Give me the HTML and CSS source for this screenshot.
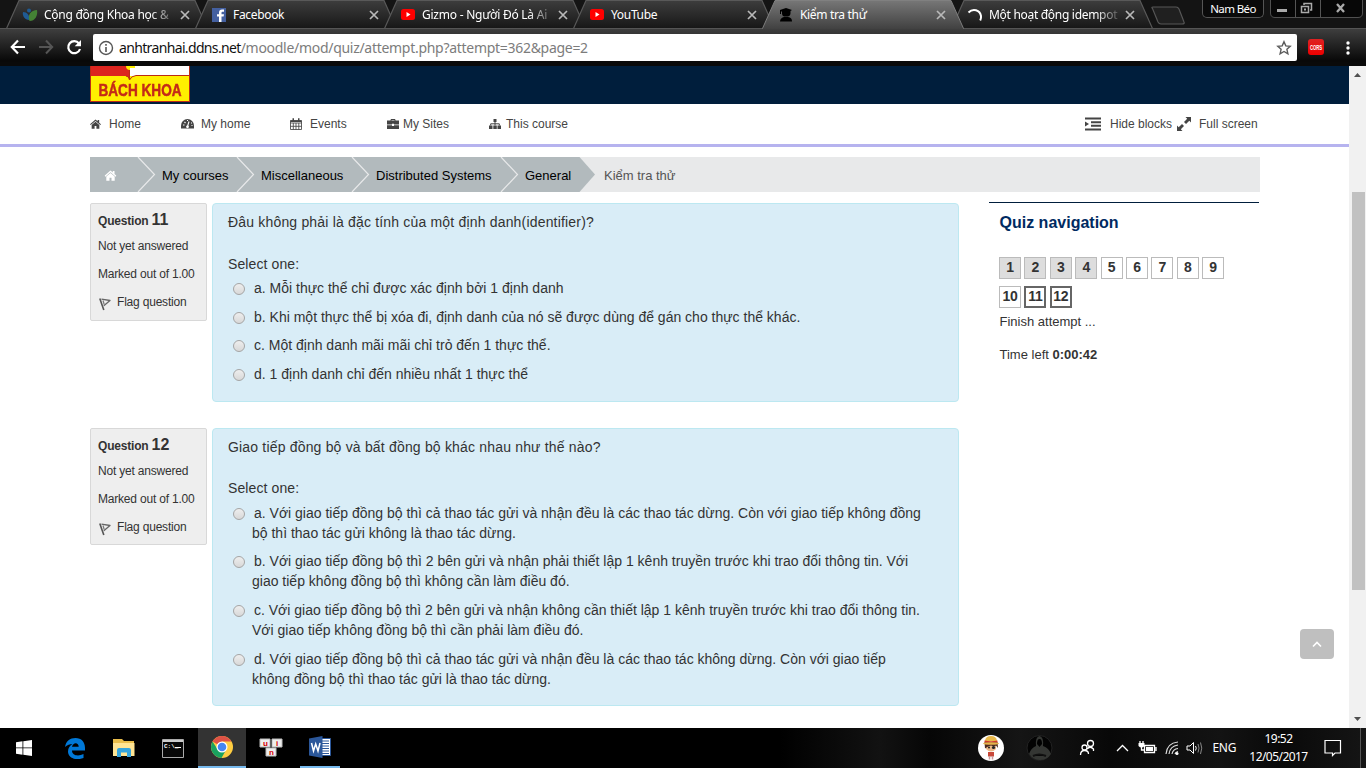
FILE: index.html
```html
<!DOCTYPE html>
<html lang="vi">
<head>
<meta charset="utf-8">
<title>Kiểm tra thử</title>
<link rel="stylesheet" href="styles.css">
</head>
<body>
<svg class="defs" width="0" height="0">
  <defs>
    <linearGradient id="tabg" x1="0" y1="0" x2="0" y2="1"><stop offset="0" stop-color="#3d3d3d"/><stop offset="1" stop-color="#171717"/></linearGradient>
    <linearGradient id="acg" x1="0" y1="0" x2="0" y2="1"><stop offset="0" stop-color="#777"/><stop offset="1" stop-color="#414141"/></linearGradient>
    <symbol id="tab" viewBox="0 0 202 29"><path d="M.5 28.500L13 .5H189L201.500 28.500Z" fill="url(#tabg)"/><path d="M.5 28.500L13 .5H189L201.500 28.500" fill="none" stroke="#595959" stroke-width="1.200"/></symbol>
    <symbol id="tabactive" viewBox="0 0 202 29"><path d="M.5 29L13 .5H189L201.500 29Z" fill="url(#acg)"/><path d="M.5 28.500L13 .5H189L201.500 28.500" fill="none" stroke="#808080"/></symbol>
    <symbol id="close" viewBox="0 0 10 10"><path d="M1 1L9 9M9 1L1 9" stroke="#b9b9b9" stroke-width="1.700"/></symbol>
    <symbol id="yt" viewBox="0 0 14 11"><rect width="14" height="11" rx="2.500" fill="#f00"/><path d="M5.500 3L9.500 5.500 5.500 8Z" fill="#fff"/></symbol>
    <symbol id="house" viewBox="0 0 12 11"><path d="M6 .5L0 5.700l.8 1L6 2.300l5.200 4.400.8-1-2-1.700V1H8.300V2.500Z" fill="currentColor"/><path d="M6 3L1.800 6.500V10.700H5V7.700H7V10.700H10.200V6.500Z" fill="currentColor"/></symbol>
    <symbol id="flag" viewBox="0 0 12 14"><path d="M.8 1.500L4.800 13" fill="none" stroke="#555" stroke-width="1.600"/><path d="M2.500 2.200L11 3.500 4.800 8.700" fill="none" stroke="#666" stroke-width="1.300" stroke-linejoin="round"/><path d="M4 3.500L5.200 7.500" stroke="#777" stroke-width="1.200"/></symbol>
  </defs>
</svg>

<header class="browser">
  <div class="strip">
    <div class="tabs">
      <div class="tab"><svg class="shape"><use href="#tab"/></svg><svg class="fav" viewBox="0 0 16 16"><circle cx="7" cy="3.500" r="2" fill="#1f5b94"/><path d="M1 5c4 0 7 3 6 8C3 13 0 9 1 5Z" fill="#1f5b94"/><path d="M15 3C9 3 5 8 7.500 14 13 14 16 9 15 3Z" fill="#448235"/></svg><span class="label fade t1">Cộng đồng Khoa học &amp;</span><svg class="x"><use href="#close"/></svg></div>
      <div class="tab"><svg class="shape"><use href="#tab"/></svg><svg class="fav" viewBox="0 0 16 16"><path d="M1 1H15V15H1Z" fill="#4460a0"/><path d="M8 15V9.500H6V7.200H8V5.500C8 3.500 9.200 2.500 11 2.500h2v2.200H11.700c-.9 0-1.200.4-1.200 1.100V7.200H13L12.600 9.500H10.500V15Z" fill="#fff"/></svg><span class="label">Facebook</span><svg class="x"><use href="#close"/></svg></div>
      <div class="tab"><svg class="shape"><use href="#tab"/></svg><svg class="fav yt"><use href="#yt"/></svg><span class="label fade t3">Gizmo - Người Đó Là Ai</span><svg class="x"><use href="#close"/></svg></div>
      <div class="tab"><svg class="shape"><use href="#tab"/></svg><svg class="fav yt"><use href="#yt"/></svg><span class="label">YouTube</span><svg class="x"><use href="#close"/></svg></div>
      <div class="tab active"><svg class="shape"><use href="#tabactive"/></svg><svg class="fav" viewBox="0 0 16 16"><path d="M2 3L8 1l6 2-1.500 1V6c0 3-2 3.500-4.500 3.500S4 9 4 6V4.500H3V7H2ZM2 14.500c0-2.500 2-4 4-4.500h4c3 .5 4 2 4 4.500Z" fill="#000"/></svg><span class="label">Kiểm tra thử</span><svg class="x"><use href="#close"/></svg></div>
      <div class="tab"><svg class="shape"><use href="#tab"/></svg><svg class="fav spin" viewBox="0 0 16 16"><path d="M1.500 4.500C6 0 13 2 14 8c.2 1.500 0 3-.8 4.500" fill="none" stroke="#fff" stroke-width="2"/></svg><span class="label fade t6">Một hoạt động idempot</span><svg class="x"><use href="#close"/></svg></div>
    </div>
    <svg class="newtab" viewBox="0 0 36 20"><path d="M2.500 2.500Q1 1 3 1H26Q28 1 29 3L34 16Q35 18 32 18H11Q9 18 8 16Z" fill="#202020" stroke="#565656" stroke-width="1.200"/></svg>
    <div class="user">Nam Béo</div>
    <svg class="winbtns" viewBox="0 0 94 18"><path d="M.5 0V13Q.5 17.500 5 17.500H88Q92.500 17.500 92.500 13V0" fill="#070707" stroke="#505050"/><path d="M25.500 0V17M50.500 0V17" stroke="#555"/><path d="M7 9H17V12H7Z" fill="#aaa"/><path d="M31.500 6.500H38.500V12.500H31.500ZM34 5V3.500H41.500V10H40" fill="none" stroke="#aaa" stroke-width="1.500"/><path d="M34 8.500h2v2h-2z" fill="#aaa"/><path d="M67 4l7 8M74 4l-7 8" stroke="#aaa" stroke-width="2.300"/></svg>
  </div>
  <div class="toolbar">
    <svg class="navicons" viewBox="0 0 93 34"><path d="M25 19H12.500M18 12.500L11.800 19 18 25.500" fill="none" stroke="#fff" stroke-width="2.200"/><path d="M39 19H51.500M46 12.500L52.200 19 46 25.500" fill="none" stroke="#555" stroke-width="2"/><path d="M79 15.500A6 6 0 1 0 80 21" fill="none" stroke="#fff" stroke-width="2.200"/><path d="M81 12V18.300H74.700Z" fill="#fff"/></svg>
    <div class="omnibox">
      <svg class="info" viewBox="0 0 16 16"><circle cx="8" cy="8" r="6.500" fill="none" stroke="#555" stroke-width="1.400"/><path d="M8 7V12M8 4V5.700" stroke="#555" stroke-width="1.600"/></svg>
      <span class="url"><b>anhtranhai.ddns.net</b>/moodle/mod/quiz/attempt.php?attempt=362&amp;page=2</span>
      <svg class="star" viewBox="0 0 16 16"><path d="M8 1.700L9.800 5.900l4.400.4L10.900 9.300l1 4.500L8 11.500 4.100 13.800l1-4.500L1.800 6.300l4.400-.4Z" fill="none" stroke="#5b5b5b" stroke-width="1.400"/></svg>
    </div>
    <div class="cors"><svg width="16" height="16" viewBox="0 0 16 16"><text x="2" y="10.500" textLength="12" lengthAdjust="spacingAndGlyphs">CORS</text></svg></div>
    <svg class="dots" viewBox="0 0 4 14"><circle cx="2" cy="2" r="1.700"/><circle cx="2" cy="7" r="1.700"/><circle cx="2" cy="12" r="1.700"/></svg>
  </div>
</header>

<div class="viewport">
  <main class="page">
    <div class="banner"><div class="logo"><svg class="book" viewBox="0 0 98 14"><path d="M0 0H98V10H0Z" fill="#fff"/><path d="M0 0H39V12H0Z" fill="#dc241f"/><path d="M0 10H34Q38 10 39 14Q40 10 46 10H98V14H0Z" fill="#fff000"/><path d="M35 0H44V2H39V4Q35 4 35 0Z" fill="#fff000"/><path d="M38.500 4V13M35 10Q38 10 38.500 14Q40 10 45 9.500H98" stroke="#ba2b15" fill="none"/></svg><span>BÁCH KHOA</span></div></div>
    <nav class="menu">
      <a class="m1"><svg viewBox="0 0 12 11"><use href="#house"/></svg>Home</a>
      <a class="m2"><svg viewBox="0 0 13 11"><path d="M0 10V7A6.500 6.500 0 0 1 13 7V10Z" fill="#444"/><path d="M6.500 8L8 3M2 6.500h1.500M3.500 3.500L4.500 4.500M6 2h1M10 4.500h1M10.500 7h1" stroke="#fff" stroke-width="1.100"/><circle cx="6.500" cy="8.300" r="1.400" fill="#fff"/></svg>My home</a>
      <a class="m3"><svg viewBox="0 0 12 12"><path d="M.5 2.500H11.500V11.500H.5ZM.5 5H11.500M.5 8.300H11.500M3.300 5V11.500M6 5V11.500M8.800 5V11.500" fill="none" stroke="#444" stroke-width=".85"/><path d="M.5 2.500H11.500V4H.5ZM2.500.3H4V3H2.500ZM8 .3H9.500V3H8Z" fill="#444"/></svg>Events</a>
      <a class="m4"><svg viewBox="0 0 12 11"><path d="M0 2H12V6H7V5.200H5V6H0ZM0 6.700H5V7.500H7V6.700H12V10.500H0Z" fill="#444"/><path d="M4 2.500V1H8V2.500" stroke="#444" fill="none"/></svg>My Sites</a>
      <a class="m5"><svg viewBox="0 0 12 11"><path d="M4.500 0.500H7.500V3.500H4.500ZM0 7H3.500V10.500H0ZM4.300 7H7.800V10.500H4.300ZM8.500 7H12V10.500H8.500Z" fill="#444"/><path d="M6 3V7M1.700 7V5.300H10.300V7" fill="none" stroke="#444"/></svg>This course</a>
      <a class="m6"><svg viewBox="0 0 16 14"><path d="M0 1.500H16M6 5.200H16M6 8.800H16M0 12.500H16" stroke="#444" stroke-width="1.900"/><path d="M0 4.500L4 7 0 9.500Z" fill="#444"/></svg>Hide blocks</a>
      <a class="m7"><svg viewBox="0 0 14 14"><path d="M8.500 0H14V5.500L12.300 3.800 9 7 7 5 10.200 1.700ZM0 8.500L1.700 10.200 5 7 7 9 3.800 12.300 5.500 14H0Z" fill="#444"/></svg>Full screen</a>
    </nav>
    <div class="crumbs">
      <svg class="arrows" viewBox="0 0 1170 35"><path d="M0 0H489.500L505 17.500 489.500 35H0Z" fill="#b2babd"/><path d="M48 0L64.500 17.500 48 35M147 0L163.500 17.500 147 35M262 0L278.500 17.500 262 35M411 0L427.500 17.500 411 35" fill="none" stroke="#e8e9ea" stroke-width="1.200"/></svg>
      <span class="c0"><svg viewBox="0 0 12 11"><use href="#house"/></svg></span><span class="c1">My courses</span><span class="c2">Miscellaneous</span><span class="c3">Distributed Systems</span><span class="c4">General</span><span class="c5">Kiểm tra thử</span>
    </div>
    <div class="columns">
      <div class="questions">
        <section class="question">
          <aside class="qinfo"><h3>Question <b>11</b></h3><p>Not yet answered</p><p>Marked out of 1.00</p><p class="fl"><svg><use href="#flag"/></svg>Flag question</p></aside>
          <div class="form q11">
            <p class="qt">Đâu không phải là đặc tính của một định danh(identifier)?</p>
            <p class="sel">Select one:</p>
            <label><i></i><span>a. Mỗi thực thể chỉ được xác định bởi 1 định danh</span></label>
            <label><i></i><span>b. Khi một thực thể bị xóa đi, định danh của nó sẽ được dùng để gán cho thực thể khác.</span></label>
            <label><i></i><span>c. Một định danh mãi mãi chỉ trỏ đến 1 thực thể.</span></label>
            <label><i></i><span>d. 1 định danh chỉ đến nhiều nhất 1 thực thể</span></label>
          </div>
        </section>
        <section class="question">
          <aside class="qinfo"><h3>Question <b>12</b></h3><p>Not yet answered</p><p>Marked out of 1.00</p><p class="fl"><svg><use href="#flag"/></svg>Flag question</p></aside>
          <div class="form q12">
            <p class="qt">Giao tiếp đồng bộ và bất đồng bộ khác nhau như thế nào?</p>
            <p class="sel">Select one:</p>
            <label><i></i><span>a. Với giao tiếp đồng bộ thì cả thao tác gửi và nhận đều là các thao tác dừng. Còn với giao tiếp không đồng<br>bộ thì thao tác gửi không là thao tác dừng.</span></label>
            <label><i></i><span>b. Với giao tiếp đồng bộ thì 2 bên gửi và nhận phải thiết lập 1 kênh truyền trước khi trao đổi thông tin. Với<br>giao tiếp không đồng bộ thì không cần làm điều đó.</span></label>
            <label><i></i><span>c. Với giao tiếp đồng bộ thì 2 bên gửi và nhận không cần thiết lập 1 kênh truyền trước khi trao đổi thông tin.<br>Với giao tiếp không đồng bộ thì cần phải làm điều đó.</span></label>
            <label><i></i><span>d. Với giao tiếp đồng bộ thì cả thao tác gửi và nhận đều là các thao tác không dừng. Còn với giao tiếp<br>không đồng bộ thì thao tác gửi là thao tác dừng.</span></label>
          </div>
        </section>
      </div>
      <aside class="side">
        <h2>Quiz navigation</h2>
        <div class="nums"><b class="done">1</b><b class="done">2</b><b class="done">3</b><b class="done">4</b><b>5</b><b>6</b><b>7</b><b>8</b><b>9</b><b>10</b><b class="cur">11</b><b class="cur">12</b></div>
        <p class="finish">Finish attempt ...</p>
        <p class="time">Time left <b>0:00:42</b></p>
      </aside>
    </div>
    <div class="totop"><svg viewBox="0 0 10 7"><path d="M1 5.500L5 1.500 9 5.500" fill="none" stroke="#fff" stroke-width="1.600"/></svg></div>
  </main>
  <div class="scroll">
    <svg viewBox="0 0 17 17"><path d="M5 11L8.500 7 12 11Z" fill="#505050"/></svg>
    <div class="thumb"></div>
    <svg viewBox="0 0 17 17"><path d="M5 6L8.500 10 12 6Z" fill="#505050"/></svg>
  </div>
</div>

<footer class="taskbar">
  <div class="app start"><svg width="16" height="16" viewBox="0 0 16 16"><path d="M0 2.200L6.500 1.300V7.500H0ZM7.300 1.200L16 0V7.500H7.300ZM0 8.300H6.500V14.700L0 13.800ZM7.300 8.300H16V16L7.300 14.800Z" fill="#fff"/></svg></div>
  <div class="app"><svg width="20" height="21" viewBox="0 0 20 21"><path d="M0 9C1 3 5 0 10.500 0 16.500 0 20 4 20 10V12.500H7C7 18 14 18.500 18.500 16V20C11 23 3 20 3 13.500 3 10 5 7.500 7.500 6 5 6 2 7 0 9ZM7 8.700H13.700C13.700 4 8 4 7 8.700Z" fill="#0078d7" fill-rule="evenodd"/></svg></div>
  <div class="app"><svg width="22" height="20" viewBox="0 0 22 20"><path d="M0 1H9L11 3H21V18H0Z" fill="#e9bd4b"/><path d="M0 5H21.500V18H0Z" fill="#ffe493"/><path d="M4 19V12Q4 10 6 10H16Q18 10 18 12V19H14V14.500H8V19Z" fill="#35a4dc"/></svg></div>
  <div class="app"><svg width="22" height="19" viewBox="0 0 22 19"><path d="M.5.5H21.500V18.500H.5Z" fill="#080808" stroke="#aaa"/><path d="M1 1H21V3H1Z" fill="#ccc"/><text x="2" y="9" class="cmd">C:\_</text><path d="M13 8.500H19" stroke="#fff"/></svg></div>
  <div class="app on"><svg width="22" height="22" viewBox="0 0 22 22"><circle cx="11" cy="11" r="11" fill="#ffcd41"/><path d="M11 11L1.500 5.500A11 11 0 0 1 20.500 5.500H11Z" fill="#de5246"/><path d="M1.500 5.500A11 11 0 0 0 10.500 22L15 14 7 14Z" fill="#19a25f"/><circle cx="11" cy="11" r="5.500" fill="#fff"/><circle cx="11" cy="11" r="4.300" fill="#4586f3"/></svg></div>
  <div class="app"><svg width="24" height="20" viewBox="0 0 24 20"><path d="M1 1H11V9H1ZM13 1H23V9H13ZM7 10H17V18H7Z" fill="#eee" stroke="#bbb"/><text x="4" y="7.500" class="uni">u</text><text x="17" y="7.500" class="uni">i</text><text x="10" y="16.500" class="uni">n</text></svg></div>
  <div class="app open"><svg width="22" height="22" viewBox="0 0 22 22"><path d="M12 2.500H21.500V19.500H12Z" fill="#fff" stroke="#2b579a"/><path d="M13 5H20M13 7.500H20M13 10H20M13 12.500H20M13 15H20M13 17.500H20" stroke="#2b579a"/><path d="M0 2.500L13.500 0V22L0 19.500Z" fill="#2b579a"/><path d="M2.500 7L4.500 15 6.700 8 9 15 11 7" fill="none" stroke="#fff" stroke-width="1.500"/></svg></div>
  <svg class="tray" viewBox="0 0 245 40">
    <circle cx="31" cy="20" r="13" fill="#fff"/><path d="M26 16H36V21Q31 26 26 21Z" fill="#eab98a"/><path d="M24.500 14H37.500L38 20 36 17.500 34 18.500 31 17.500 28 18.500 25 20.500Z" fill="#4b2a20"/><circle cx="29" cy="19.500" r="1" fill="#222"/><circle cx="33.500" cy="19.500" r="1.600" fill="#222"/><path d="M25 13Q25.500 8 31 8 36.500 8 37 13Z" fill="#e8b849"/><path d="M24.500 12.500Q31 14 37.500 12.500V14.500H24.500Z" fill="#d33a2b"/><ellipse cx="31" cy="15.500" rx="8" ry="1.300" fill="#e5b34b"/><path d="M28 24h6v4.500h-6z" fill="#c9493a"/><path d="M29.500 28v3.500M32.500 28v3.500" stroke="#c99" stroke-width="1.500"/>
    <circle cx="79.500" cy="20" r="12.500" fill="#030303" stroke="#222"/><path d="M76 18Q75 9 79.500 8 84 9 83 18Q89 20 91 26 87 32 80 32 73 32 69 26 71 20 76 18Z" fill="#343633"/><path d="M77 16Q77 11 79.500 11T82 16L79.500 19Z" fill="#000"/><path d="M73 28Q79 25 86 28" stroke="#111" stroke-width="2"/>
    <g fill="none" stroke="#fff" stroke-width="1.300"><circle cx="124.500" cy="19.500" r="2.500"/><path d="M120.500 27Q120.500 22.500 124.500 22.500T128.500 26"/><circle cx="130.500" cy="15.500" r="3"/><path d="M127 21Q130 17.500 133.500 21V23"/><path d="M157 23L162.500 17.500 168 23"/><path d="M184.500 17.500H194.500V24.500H184.500ZM196 19V23M180 13V16M183 13V16M181.500 19V22H184"/></g>
    <path d="M178.500 15H184.500V18Q181.500 21 178.500 18ZM186 19H193V23H186Z" fill="#fff"/>
    <path d="M206 26Q207 15 218 14M209 26Q210 18 218 17M212 26Q213 21 218 20.500M215 26Q215.500 24 218 23.500" fill="none" stroke="#ddd" stroke-width="1.200"/><circle cx="217" cy="25.500" r="1.500" fill="#fff"/>
    <path d="M227 18H230L233.500 14.500V25.500L230 22H227Z" fill="none" stroke="#fff"/><path d="M235.500 18Q237 20 235.500 22.500" fill="none" stroke="#fff"/><path d="M238 16Q240 20 238 24.500M240.500 14.500Q243 20 240.500 26" fill="none" stroke="#888"/>
  </svg>
  <span class="eng">ENG</span>
  <div class="clock"><span>19:52</span><span class="date">12/05/2017</span></div>
  <svg class="note" viewBox="0 0 18 18"><path d="M1 1.500H16.500V14H11L8.500 16.500V14H1Z" fill="none" stroke="#fff" stroke-width="1.200"/></svg>
  <div class="peek"></div>
</footer>
</body>
</html>
```
FILE: styles.css
```css
* { box-sizing: border-box; }
body { margin: 0; width: 1366px; height: 768px; overflow: hidden; background: #fff; font-family: "Liberation Sans", Arial, sans-serif; color: #333; display: flex; flex-direction: column; }
p, h2, h3 { margin: 0; }
svg { display: block; flex: none; }
.defs { position: absolute; }

/* browser chrome */
.browser { height: 66px; flex: none; background: #0a0a0a; font-family: "Noto Sans", sans-serif; }
.strip { height: 28px; display: flex; background: #141414; }
.tabs { display: flex; width: 1150px; padding-left: 6px; flex: none; }
.tab { position: relative; flex: none; width: 202px; height: 29px; margin-right: -13px; padding-left: 16px; display: flex; align-items: center; color: #fff; font-size: 12px; }
.tab.active { z-index: 2; }
.shape { position: absolute; left: 0; top: 0; width: 202px; height: 29px; }
.fav { position: relative; width: 16px; height: 16px; margin-right: 6px; }
.fav.yt { width: 14px; height: 11px; margin: 0 7px 0 1px; }
.fav.spin { margin-top: 2px; }
.label { position: relative; width: 130px; margin-right: 7px; white-space: nowrap; line-height: 20px; letter-spacing: -.33px; }
.fade { -webkit-mask-image: linear-gradient(90deg, #000 82%, rgba(0,0,0,.15)); mask-image: linear-gradient(90deg, #000 82%, rgba(0,0,0,.15)); }
.t1 { letter-spacing: -.26px; }
.t3 { letter-spacing: -.24px; }
.t6 { letter-spacing: -.3px; }
.x { position: relative; width: 10px; height: 10px; margin-left: -1px; }
.newtab { width: 36px; height: 20px; margin-top: 6px; }
.user { width: 62px; height: 18px; margin-left: 16px; border: 1px solid #555; border-top: 0; border-radius: 0 0 5px 5px; background: #0a0a0a; color: #fff; font-size: 11.500px; line-height: 18px; text-align: center; letter-spacing: -.6px; white-space: nowrap; }
.winbtns { width: 94px; height: 18px; margin-left: 6px; }
.toolbar { position: relative; height: 34px; display: flex; background: linear-gradient(#3e3e3e, #090909 95%); border-top: 1px solid #555; }
.navicons { width: 93px; height: 34px; margin-top: -1px; }
.omnibox { width: 1204px; height: 27px; margin-top: 5px; display: flex; align-items: center; background: #fff; border-radius: 2px; padding-left: 5px; }
.info { width: 16px; height: 16px; margin-right: 5px; }
.url { flex: 1; font-size: 14px; color: #7c7c7c; white-space: nowrap; letter-spacing: -.29px; }
.url b { font-weight: 400; color: #111; letter-spacing: -.65px; }
.star { width: 16px; height: 16px; margin-right: 5px; }
.cors { width: 16px; height: 16px; margin: 10px 0 0 11px; background: linear-gradient(#d22, #e00); border-radius: 3px; }
.cors svg { overflow: visible; }
.cors text { font: bold 6.500px "Liberation Sans", sans-serif; fill: #fff; }
.dots { width: 4px; height: 14px; margin: 12px 0 0 22px; fill: #fff; }

/* page and scrollbar */
.viewport { height: 662px; display: flex; flex: none; }
.page { width: 1349px; position: relative; }
.scroll { width: 17px; background: #f1f1f1; display: flex; flex-direction: column; align-items: center; }
.scroll svg { width: 17px; height: 17px; }
.thumb { width: 13px; height: 398px; margin: 109px 0 121px 1px; background: #c1c1c1; }
.banner { height: 38px; background: #001e3c; padding-left: 90px; }
.logo { width: 100px; height: 36px; background: #fff000; border: solid #ba2b15; border-width: 0 1px 1px; overflow: hidden; text-align: center; }
.book { width: 98px; height: 14px; }
.logo span { display: block; font: bold 17px/21px "Liberation Sans", sans-serif; color: #c42a18; white-space: nowrap; transform: scaleX(.8); margin: 0 -10px; -webkit-text-stroke: .5px #c42a18; }
.menu { height: 43px; padding-left: 90px; border-bottom: 3px solid #b6b3ef; display: flex; align-items: center; font-size: 12px; color: #444; }
.menu a { display: flex; align-items: center; white-space: nowrap; }
.menu svg { width: 12px; height: 12px; }
.m1 { width: 91px; } .menu .m1 svg { width: 11px; margin-right: 8px; }
.m2 { width: 109px; } .menu .m2 svg { width: 13px; margin-right: 7px; }
.m3 { width: 97px; } .m3 svg { margin-right: 8px; }
.m4 { width: 102px; } .m4 svg { margin-right: 4px; }
.m5 { width: 596px; } .m5 svg { margin-right: 5px; }
.m6 { width: 92px; } .menu .m6 svg { width: 16px; height: 14px; margin-right: 9px; }
.menu .m7 svg { width: 14px; height: 14px; margin-right: 8px; }
.crumbs { position: relative; width: 1170px; height: 35px; margin: 10px 0 0 90px; background: #e8e9ea; display: flex; line-height: 37px; font-size: 13px; color: #000; white-space: nowrap; }
.arrows { position: absolute; left: 0; top: 0; width: 1170px; height: 35px; }
.crumbs span { position: relative; }
.c0 { width: 72px; padding: 13px 0 0 14px; color: #fff; } .c0 svg { width: 13px; height: 11px; }
.c1 { width: 99px; } .c2 { width: 115px; } .c3 { width: 149px; } .c4 { width: 79px; }
.c5 { color: #555; }

/* quiz */
.columns { display: flex; margin: 11px 0 0 90px; }
.questions { width: 899px; }
.question { display: flex; align-items: flex-start; margin-bottom: 26px; }
.qinfo { width: 117px; height: 118px; margin-right: 5px; background: #eee; border: 1px solid #d8d8d8; border-radius: 2px; padding: 5px 7px; font-size: 12px; line-height: 20px; letter-spacing: -.2px; white-space: nowrap; }
.question + .question .qinfo { height: 117px; }
.qinfo h3 { font-size: 12px; line-height: 22px; margin: 0 0 4px; }
.qinfo h3 b { font-size: 16px; letter-spacing: 0; }
.qinfo p { margin-bottom: 8px; }
.fl { display: flex; } .fl svg { width: 12px; height: 14px; margin: 5px 6px 0 1px; }
.form { width: 747px; background: #d9edf7; border: 1px solid #bce8f1; border-radius: 4px; padding: 8px 0 0 15px; font-size: 14px; line-height: 20px; white-space: nowrap; }
.q11 { height: 199px; } .q12 { height: 278px; }
.qt { letter-spacing: .18px; }
.sel { margin: 21px 0 1px; letter-spacing: .1px; }
.q11 .sel { margin: 22px 0 0; }
.form label { display: flex; padding: 4.300px 0; margin-left: 5px; }
.q12 label { padding: 4.200px 0; }
.q12 label:nth-of-type(2) { padding: 3.700px 0 4.700px; }
.q12 label:nth-of-type(4) { padding-top: 4.600px; }
.form label i { flex: none; width: 12px; height: 12px; margin: 5px 7px 0 0; border: 1px solid #a5a5a5; border-radius: 50%; background: linear-gradient(#eee, #d8d8d8); }
.form label span { text-indent: 2px; }
.side { width: 270px; margin-top: -1px; border-top: 1px solid #001e3c; padding: 10px 0 0 10px; font-size: 13px; line-height: 20px; }
.side h2 { font-size: 16px; line-height: 20px; color: #002a61; margin: 0 0 24px .5px; }
.nums { display: grid; grid-template-columns: repeat(9, 22px); gap: 7px 3.400px; }
.nums b { height: 22px; border: 1px solid #bbb; line-height: 19px; font-size: 14px; text-align: center; letter-spacing: -.2px; }
.nums .done { background: #ddd; }
.nums .cur { border: 2px solid #666; line-height: 17px; }
.finish { margin: 4px 0 13px .5px; }
.time { margin-left: .5px; }
.totop { position: absolute; left: 1300px; top: 563px; width: 34px; height: 30px; border-radius: 4px; background: #bfbfbf; display: flex; align-items: center; justify-content: center; }
.totop svg { width: 10px; height: 7px; }

/* taskbar */
.taskbar { height: 40px; display: flex; color: #fff; font: 12px "Noto Sans", sans-serif; background: linear-gradient(90deg, #000 780px, #121212 880px, #060606 930px, #151515 1020px, #080808 1110px, #131313 1220px, #090909 1280px, #151515); }
.app { width: 48px; margin-right: 1px; display: flex; align-items: center; justify-content: center; }
.app.start { margin-right: 3px; }
.app.on { background: #333; border-bottom: 2px solid #76b9ed; }
.app.open { width: 40px; margin-left: 4px; border-bottom: 2px solid #76b9ed; }
.cmd { font: bold 6px "Liberation Mono", monospace; fill: #fff; }
.uni { font: bold 8px "Liberation Sans", sans-serif; fill: #d40000; }
.tray { width: 245px; height: 40px; margin-left: 619px; }
.eng { width: 36px; margin-left: 7.500px; line-height: 40px; letter-spacing: -.3px; }
.clock { width: 60px; line-height: 18px; padding-top: 2px; text-align: center; white-space: nowrap; letter-spacing: -.55px; }
.clock span { display: block; }
.note { width: 18px; height: 18px; margin: 11px 0 0 15.500px; }
.peek { width: 1px; height: 40px; background: #555; margin-left: 18px; }
```
